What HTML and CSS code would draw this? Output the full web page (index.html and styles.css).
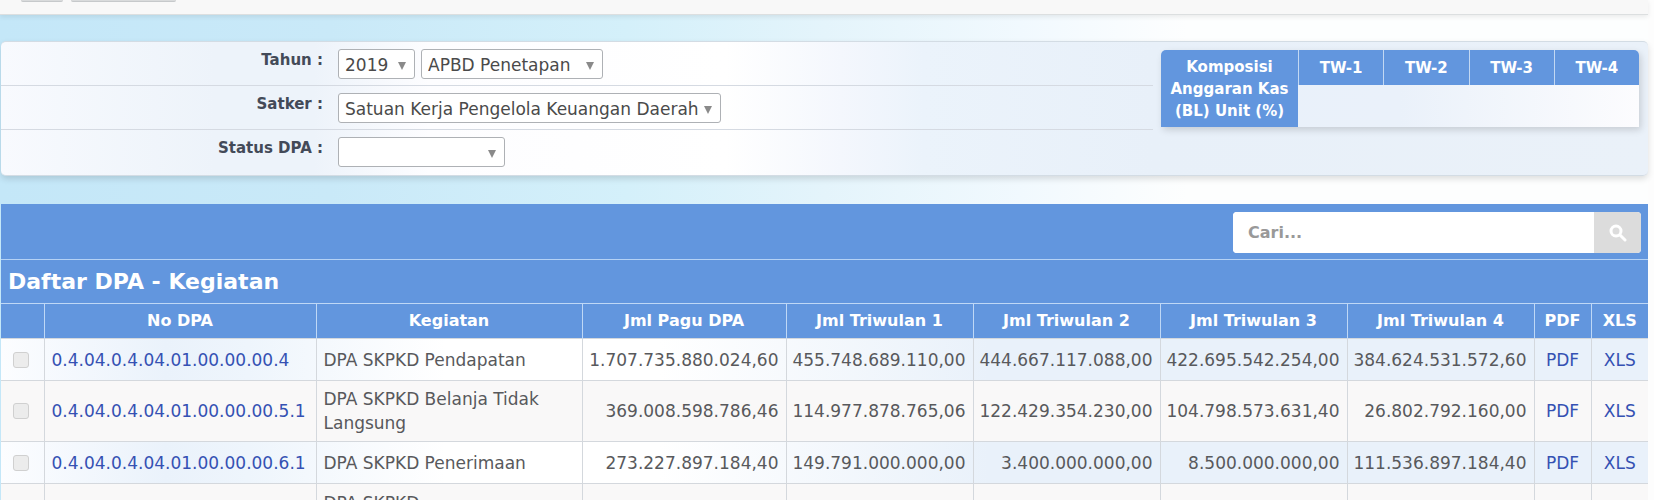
FILE: index.html
```html
<!DOCTYPE html>
<html lang="id">
<head>
<meta charset="utf-8">
<meta name="viewport" content="width=device-width, initial-scale=1">
<title>Daftar DPA - Kegiatan</title>
<link rel="stylesheet" href="styles.css">
</head>
<body>
<div class="page">
  <header class="toolbar">
    <button class="tool tool-small" type="button" aria-label="Menu"></button>
    <button class="tool tool-wide" type="button" aria-label="Navigasi"></button>
  </header>
  <main>
    <form class="filter">
      <div class="fields">
        <div class="field">
          <label class="name" for="tahun">Tahun :</label>
          <div class="controls">
            <span class="pick pick-year"><select id="tahun"><option>2019</option></select></span>
            <span class="pick pick-stage"><select aria-label="Tahapan"><option>APBD Penetapan</option></select></span>
          </div>
        </div>
        <div class="field">
          <label class="name" for="satker">Satker :</label>
          <div class="controls">
            <span class="pick pick-unit"><select id="satker"><option>Satuan Kerja Pengelola Keuangan Daerah</option></select></span>
          </div>
        </div>
        <div class="field">
          <label class="name" for="status">Status DPA :</label>
          <div class="controls">
            <span class="pick pick-status"><select id="status"><option></option></select></span>
          </div>
        </div>
      </div>
      <table class="komposisi">
        <tr>
          <th class="komposisi-title" rowspan="2" scope="row">Komposisi Anggaran Kas (BL) Unit (%)</th>
          <th scope="col">TW-1</th><th scope="col">TW-2</th><th scope="col">TW-3</th><th scope="col">TW-4</th>
        </tr>
        <tr><td></td><td></td><td></td><td></td></tr>
      </table>
    </form>

    <section class="list">
      <div class="search-bar">
        <div class="search">
          <input type="text" placeholder="Cari..." aria-label="Cari">
          <button type="button" aria-label="Cari data">
            <svg viewBox="0 0 18 18" width="18" height="18" fill="none" stroke="#fff"><circle cx="7" cy="7" r="5" stroke-width="3"/><path d="M11 11l5 5" stroke-width="3" stroke-linecap="round"/></svg>
          </button>
        </div>
      </div>
      <h2 class="list-title">Daftar DPA - Kegiatan</h2>
      <table class="dpa">
        <colgroup>
          <col class="c-check"><col class="c-no"><col><col class="c-pagu">
          <col class="c-tw"><col class="c-tw"><col class="c-tw"><col class="c-tw">
          <col class="c-file"><col class="c-file">
        </colgroup>
        <thead>
          <tr><th></th><th>No DPA</th><th>Kegiatan</th><th>Jml Pagu DPA</th><th>Jml Triwulan 1</th><th>Jml Triwulan 2</th><th>Jml Triwulan 3</th><th>Jml Triwulan 4</th><th>PDF</th><th>XLS</th></tr>
        </thead>
        <tbody>
          <tr><td class="mark"><input type="checkbox" disabled aria-label="Pilih 0.4.04.0.4.04.01.00.00.00.4"></td><td><a href="#">0.4.04.0.4.04.01.00.00.00.4</a></td><td>DPA SKPKD Pendapatan</td><td class="num">1.707.735.880.024,60</td><td class="num">455.748.689.110,00</td><td class="num">444.667.117.088,00</td><td class="num">422.695.542.254,00</td><td class="num">384.624.531.572,60</td><td class="file"><a href="#">PDF</a></td><td class="file"><a href="#">XLS</a></td></tr>
          <tr><td class="mark"><input type="checkbox" disabled aria-label="Pilih 0.4.04.0.4.04.01.00.00.00.5.1"></td><td><a href="#">0.4.04.0.4.04.01.00.00.00.5.1</a></td><td>DPA SKPKD Belanja Tidak Langsung</td><td class="num">369.008.598.786,46</td><td class="num">114.977.878.765,06</td><td class="num">122.429.354.230,00</td><td class="num">104.798.573.631,40</td><td class="num">26.802.792.160,00</td><td class="file"><a href="#">PDF</a></td><td class="file"><a href="#">XLS</a></td></tr>
          <tr><td class="mark"><input type="checkbox" disabled aria-label="Pilih 0.4.04.0.4.04.01.00.00.00.6.1"></td><td><a href="#">0.4.04.0.4.04.01.00.00.00.6.1</a></td><td>DPA SKPKD Penerimaan</td><td class="num">273.227.897.184,40</td><td class="num">149.791.000.000,00</td><td class="num">3.400.000.000,00</td><td class="num">8.500.000.000,00</td><td class="num">111.536.897.184,40</td><td class="file"><a href="#">PDF</a></td><td class="file"><a href="#">XLS</a></td></tr>
          <tr class="last"><td></td><td></td><td>DPA SKPKD</td><td></td><td></td><td></td><td></td><td></td><td></td><td></td></tr>
        </tbody>
      </table>
    </section>
  </main>
</div>
</body>
</html>
```
FILE: styles.css
```css
* { box-sizing: border-box; }
html { height: 100%; background: #fdfdfd; }
body {
  margin: 0;
  height: 100%;
  overflow: hidden;
  font-family: Verdana, "DejaVu Sans", sans-serif;
  font-size: 17px;
  color: #58595c;
}
.page {
  margin-right: 6px;
  background: linear-gradient(90deg, #c4e7f8 0%, #c9e9f8 20%, #d4f0fa 38%, #e4f4fb 50%, #f1f9fe 62%, #fdfefe 72%);
}
.toolbar {
  display: flex;
  align-items: flex-start;
  gap: 8px;
  height: 15px;
  padding-left: 21px;
  background: #f8f8f8;
  border-bottom: 1px solid #dcdfe0;
  box-shadow: 0 2px 5px rgba(0, 0, 0, .08);
}
.tool {
  height: 2px;
  padding: 0;
  border: 0;
  border-bottom: 1px solid #c6c9cb;
  border-radius: 0 0 4px 4px;
  background: #d9dbdc;
}
.tool-small { width: 42px; }
.tool-wide { width: 105px; }
main { padding: 26px 0 0 1px; }

.filter {
  display: flex;
  align-items: flex-start;
  height: 135px;
  padding-right: 9px;
  border: 1px solid #d3dce4;
  border-width: 1px 0;
  border-radius: 5px;
  background: linear-gradient(90deg, #f8fafe 0%, #edf3fa 13%, #edf3fa 19%, #fdfdff 26%, #fff 44%, #f4f7fd 51%, #ebf3fb 56%, #e8f0f9 70%, #eaf1f9 100%);
  box-shadow: 0 3px 6px rgba(0, 0, 0, .13);
}
.fields { flex: 1; }
.field {
  display: flex;
  height: 44px;
  border-bottom: 1px solid #d5dae2;
}
.field:last-child { border-bottom: 0; }
.name {
  width: 322px;
  padding-top: 8px;
  line-height: 20px;
  text-align: right;
  font-size: 15px;
  font-weight: bold;
  color: #434a58;
}
.controls {
  display: flex;
  align-items: flex-start;
  gap: 6px;
  padding: 7px 0 0 15px;
}
.pick { position: relative; }
.pick::after {
  content: "";
  position: absolute;
  right: 9px;
  top: 13px;
  border: 4px solid transparent;
  border-top: 8px solid #8a8a8a;
  border-bottom: 0;
  pointer-events: none;
}
.pick select {
  display: block;
  width: 100%;
  height: 30px;
  padding: 2px 0 0 6px;
  border: 1px solid #aeb1b5;
  border-radius: 3px;
  appearance: none;
  background: #fff;
  color: #4a4a4a;
  font: inherit;
}
.pick-year { width: 77px; }
.pick-stage { width: 182px; }
.pick-unit { width: 383px; }
.pick-status { width: 167px; }

.komposisi {
  width: 478px;
  margin: 8px 0 0 8px;
  table-layout: fixed;
  border-collapse: separate;
  border-spacing: 0;
  border-radius: 5px 5px 0 0;
  overflow: hidden;
  background: linear-gradient(90deg, #e9f1fa 0%, #eaf1fa 50%, #fcfcfe 100%);
  box-shadow: 2px 3px 7px rgba(0, 0, 0, .15);
  font-size: 15px;
  line-height: 22px;
}
.komposisi th {
  height: 35px;
  padding: 0;
  background: #6296de;
  color: #fff;
  border-left: 1px solid #c2d8f3;
}
.komposisi .komposisi-title {
  width: 137px;
  padding: 6px 4px 5px;
  border-left: 0;
}
.komposisi td { height: 42px; padding: 0; }

.list {
  margin-top: 28px;
  background: #6296de;
}
.search-bar {
  display: flex;
  justify-content: flex-end;
  padding: 8px 7px 6px;
  border-bottom: 1px solid #b5d2f5;
}
.search {
  display: flex;
  width: 408px;
  height: 41px;
  border-radius: 4px;
  overflow: hidden;
  background: #fff;
}
.search input {
  flex: 1;
  min-width: 0;
  padding: 0 15px;
  border: 0;
  font: bold 16px Verdana, "DejaVu Sans", sans-serif;
}
.search input::placeholder { color: #999; opacity: 1; }
.search button {
  display: flex;
  align-items: center;
  justify-content: center;
  width: 47px;
  padding: 0;
  border: 0;
  background: #dcdcdc;
}
.list-title {
  margin: 0;
  padding: 8px 7px 7px;
  line-height: 28px;
  font-size: 22px;
  color: #fff;
}
.dpa {
  width: 100%;
  table-layout: fixed;
  border-collapse: collapse;
  line-height: 24px;
}
.c-check { width: 43px; }
.c-no { width: 272px; }
.c-pagu { width: 204px; }
.c-tw { width: 187px; }
.c-file { width: 57px; }
.dpa th {
  height: 35px;
  padding: 0;
  background: #6296de;
  border: 1px solid #bfd8f6;
  border-bottom: 0;
  color: #fff;
  font-size: 16px;
}
.dpa td {
  height: 42px;
  padding: 6px 7px;
  border: 1px solid #d4d8dd;
}
.dpa tr > :first-child { border-left: 0; }
.dpa tr > :last-child { border-right: 0; }
.dpa tbody tr { background: linear-gradient(90deg, #fcfdff 0%, #eaf2fb 10%, #eef5fc 15%, #fff 27%, #fff 40%, #e9f1fa 60%, #e9f1fa 100%); }
.dpa tbody tr:nth-child(even) { background: #f9f8f8; }
.dpa .num { padding-left: 0; text-align: right; white-space: nowrap; }
.dpa .file { padding: 0; text-align: center; }
.dpa .mark { padding: 0 0 0 12px; }
.dpa .last td { height: 61px; padding-top: 7px; vertical-align: top; }
.dpa a { color: #3551b3; text-decoration: none; }
.dpa input {
  display: block;
  width: 16px;
  height: 16px;
  margin: 0;
  appearance: none;
  border: 1px solid #d0d0d0;
  border-radius: 3px;
  background: #ececec;
}
```
